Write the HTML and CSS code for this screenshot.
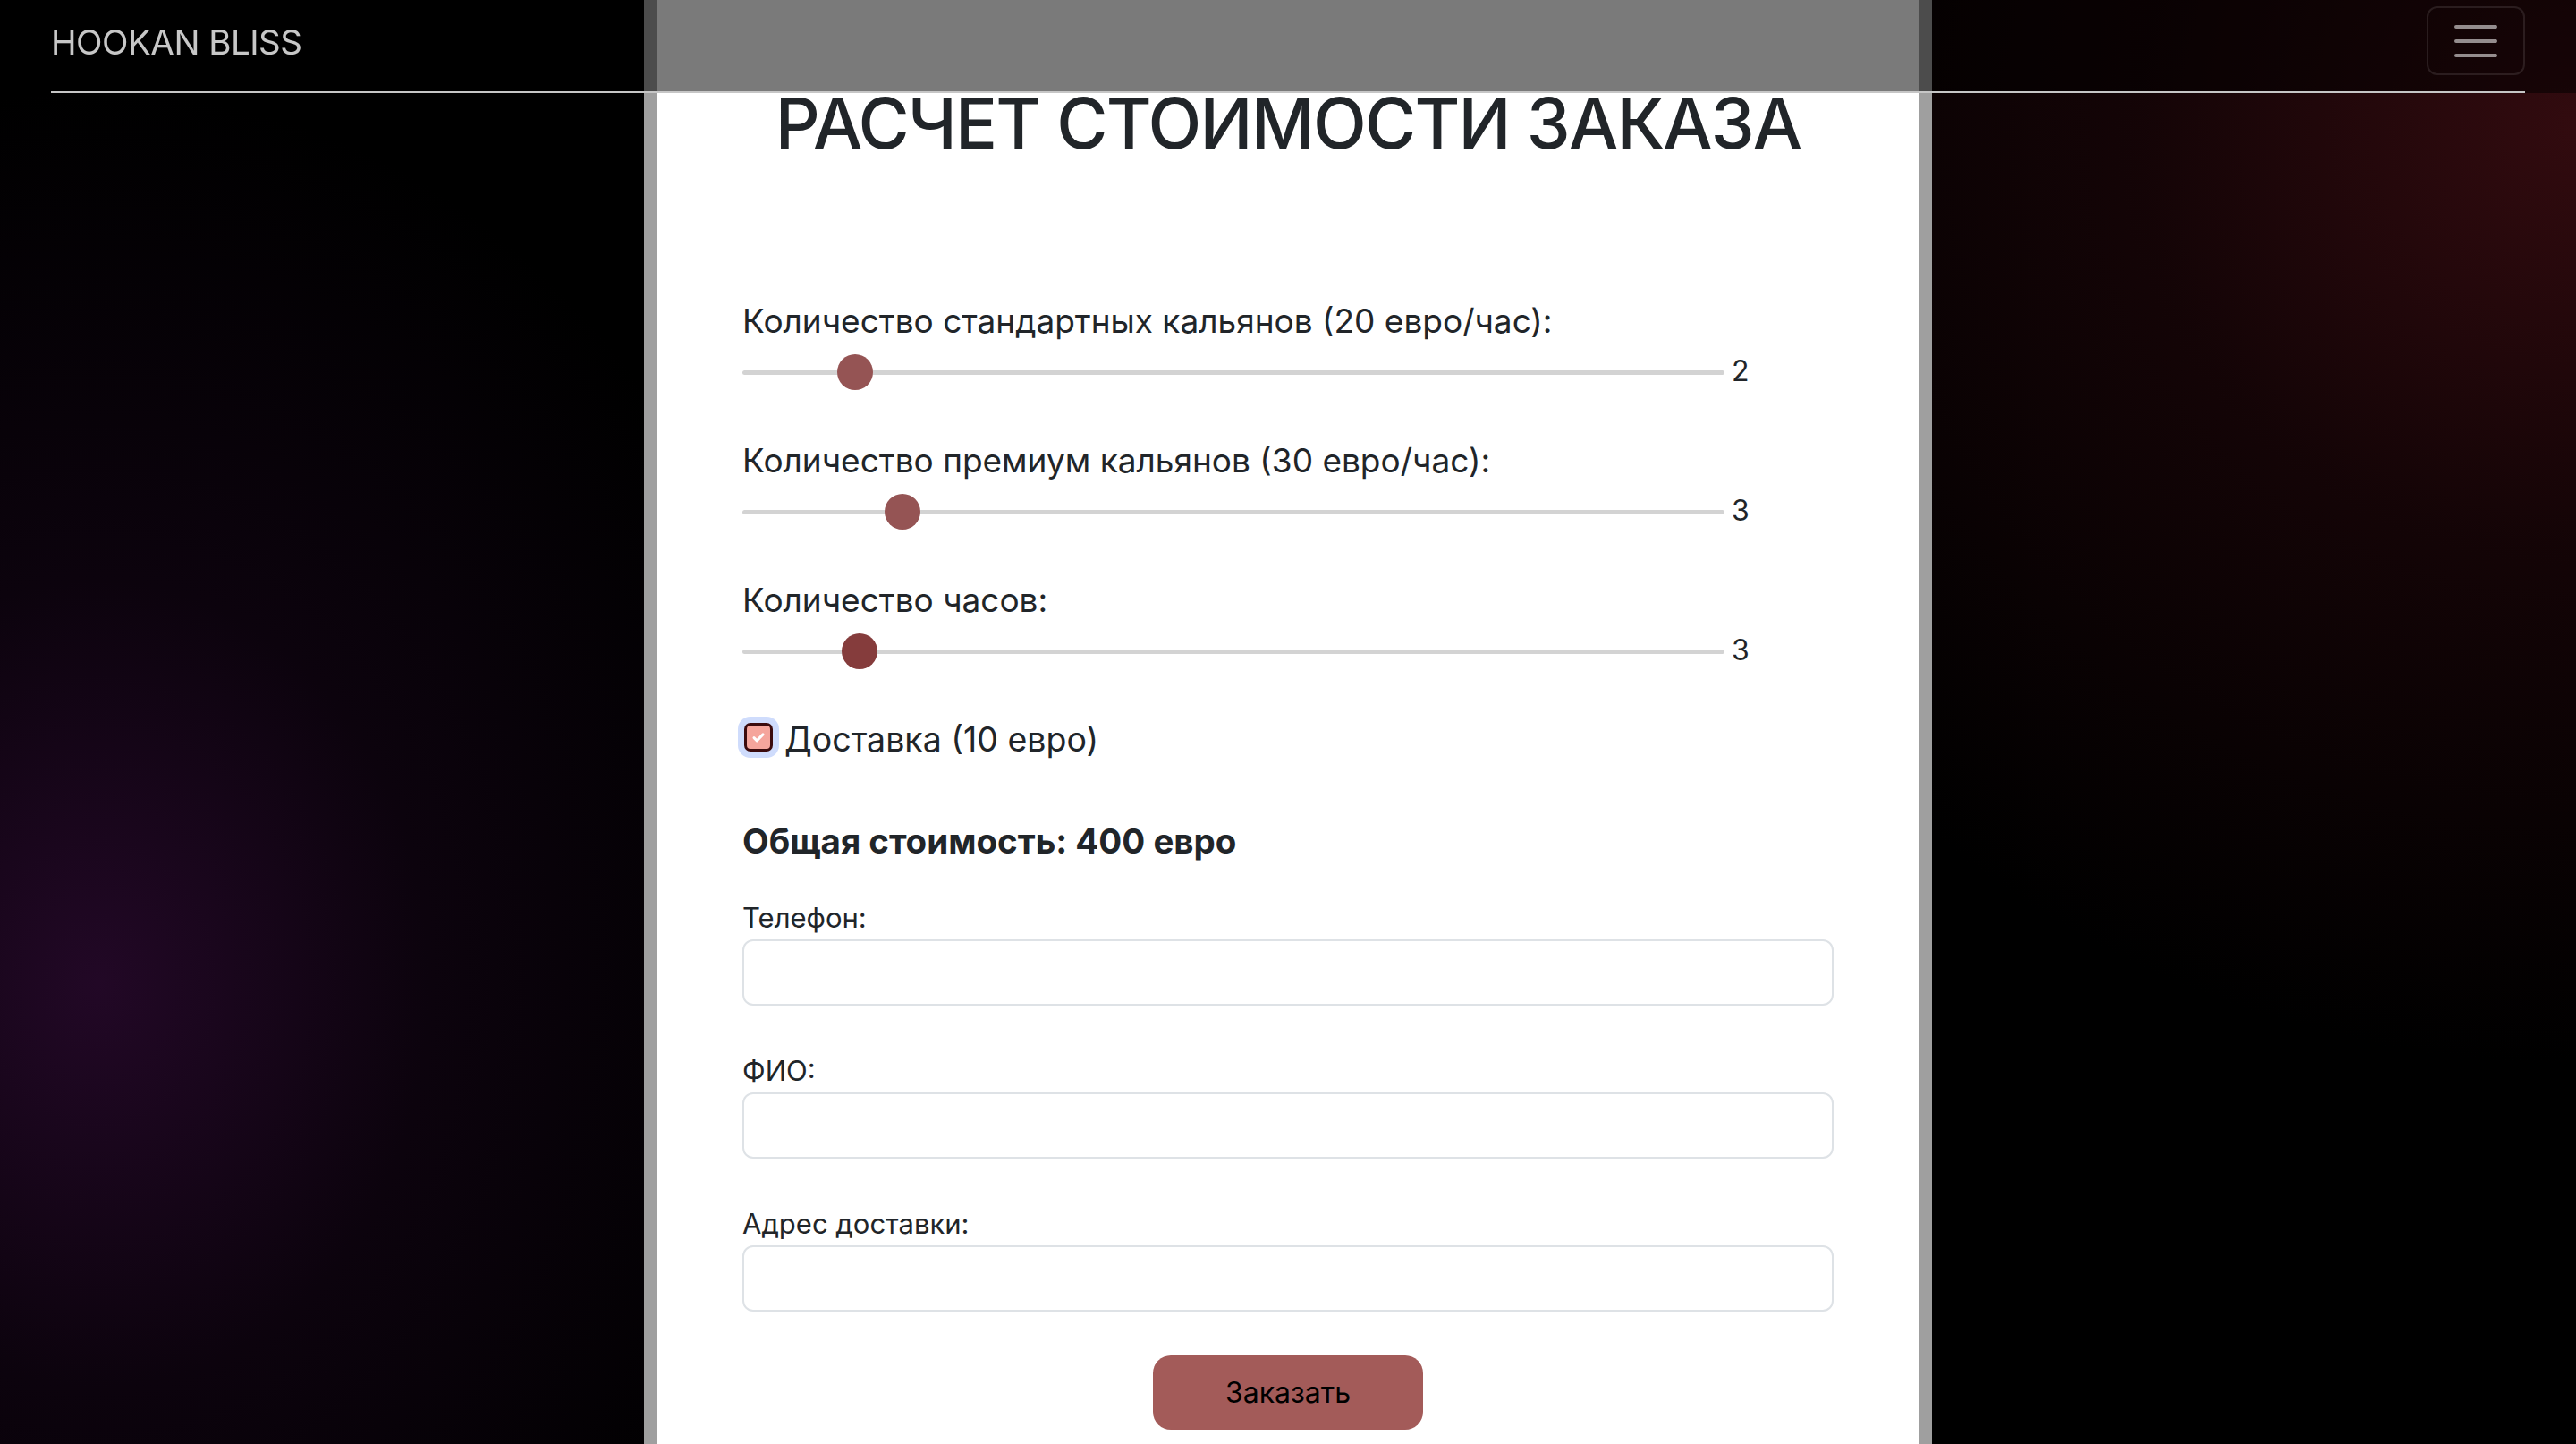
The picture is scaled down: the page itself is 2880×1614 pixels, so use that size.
FILE: index.html
```html
<!DOCTYPE html>
<html lang="ru">
<head>
<meta charset="utf-8">
<title>Hookan Bliss — Расчет стоимости заказа</title>
<link rel="stylesheet" href="styles.css">
</head>
<body>
<header class="navbar">
  <div class="navbar-inner">
    <a class="brand" href="#">HOOKAN BLISS</a>
    <button class="toggler" type="button" aria-label="Меню">
      <svg class="toggler-icon" viewBox="0 0 30 30" width="60" height="60"><path d="M4 7h22M4 15h22M4 23h22" stroke="rgba(255,255,255,0.55)" stroke-width="2" stroke-linecap="round"/></svg>
    </button>
  </div>
</header>

<main class="panel">
  <h1 class="title">РАСЧЕТ СТОИМОСТИ ЗАКАЗА</h1>

  <div class="group">
    <label class="field-label" for="std">Количество стандартных кальянов (20 евро/час):</label>
    <div class="slider-row">
      <input class="range" id="std" type="range" min="0" max="20" value="2">
      <span class="range-value">2</span>
    </div>
  </div>

  <div class="group">
    <label class="field-label" for="prem">Количество премиум кальянов (30 евро/час):</label>
    <div class="slider-row">
      <input class="range" id="prem" type="range" min="0" max="20" value="3">
      <span class="range-value">3</span>
    </div>
  </div>

  <div class="group">
    <label class="field-label" for="hours">Количество часов:</label>
    <div class="slider-row">
      <input class="range range-active" id="hours" type="range" min="1" max="20" value="3">
      <span class="range-value">3</span>
    </div>
  </div>

  <label class="check-row">
    <span class="check-box"><svg viewBox="0 0 16 16" width="20" height="20"><path d="M4 8.5l2.6 2.6L12 5.5" fill="none" stroke="#fff" stroke-width="2.4" stroke-linecap="round" stroke-linejoin="round"/></svg></span>
    <span class="check-label">Доставка (10 евро)</span>
  </label>

  <h4 class="total">Общая стоимость: 400 евро</h4>

  <div class="form-field">
    <label class="small-label" for="phone">Телефон:</label>
    <input class="form-control" id="phone" type="text">
  </div>
  <div class="form-field">
    <label class="small-label" for="fio">ФИО:</label>
    <input class="form-control" id="fio" type="text">
  </div>
  <div class="form-field">
    <label class="small-label" for="addr">Адрес доставки:</label>
    <input class="form-control" id="addr" type="text">
  </div>

  <div class="actions">
    <button class="order-btn" type="button">Заказать</button>
  </div>
</main>
</body>
</html>
```

FILE: styles.css
```css
* { box-sizing: border-box; }

html, body { margin: 0; padding: 0; }

body {
  font-family: "Inter", "Noto Sans", "Liberation Sans", sans-serif;
  color: #212529;
  min-height: 100vh;
  background:
    radial-gradient(ellipse 820px 1000px at 110px 1100px, rgba(34, 8, 38, 1) 0%, rgba(20, 5, 22, 0.6) 45%, rgba(0, 0, 0, 0) 100%),
    radial-gradient(ellipse 1100px 1050px at 2880px 140px, rgba(50, 11, 15, 1) 0%, rgba(28, 6, 9, 0.7) 45%, rgba(0, 0, 0, 0) 100%),
    #000;
  background-attachment: fixed;
}

/* Header */
.navbar {
  position: fixed;
  top: 0;
  left: 0;
  right: 0;
  z-index: 10;
  background: rgba(0, 0, 0, 0.52);
}

.navbar-inner {
  margin: 0 57px;
  padding: 7px 0 18px;
  display: flex;
  align-items: center;
  justify-content: space-between;
  border-bottom: 2px solid #c6c6c6;
}

.brand {
  font-size: 38.5px;
  color: rgba(255, 255, 255, 0.78);
  text-decoration: none;
  letter-spacing: -0.5px;
  position: relative;
  top: 1px;
}

.toggler {
  width: 110px;
  height: 77px;
  padding: 0;
  background: transparent;
  border: 2px solid rgba(255, 255, 255, 0.1);
  border-radius: 12px;
  display: flex;
  align-items: center;
  justify-content: center;
}

.toggler-icon { display: block; }

/* Panel */
.panel {
  width: 1440px;
  margin: 0 auto;
  min-height: 1700px;
  background: #fff;
  border-left: 14px solid #9f9f9f;
  border-right: 14px solid #9f9f9f;
  padding: 90px 96px 60px;
}

.title {
  margin: 0 0 143px;
  font-size: 78px;
  font-weight: 500;
  line-height: 96px;
  text-align: center;
  color: #212529;
  letter-spacing: -1.8px;
}

.group { margin-bottom: 49px; }

.field-label {
  display: block;
  font-size: 37px;
  line-height: 60px;
  margin-bottom: 7px;
}

.slider-row {
  display: flex;
  align-items: center;
  height: 40px;
}

.range {
  -webkit-appearance: none;
  appearance: none;
  width: 1098px;
  height: 40px;
  margin: 0;
  background: transparent;
}

.range::-webkit-slider-runnable-track {
  height: 5px;
  background: #d3d3d3;
  border-radius: 3px;
}

.range::-webkit-slider-thumb {
  -webkit-appearance: none;
  appearance: none;
  width: 40px;
  height: 40px;
  margin-top: -17.5px;
  border-radius: 50%;
  background: #955454;
  border: none;
}

.range-active::-webkit-slider-thumb { background: #853c3c; }

.range-value {
  margin-left: 8px;
  font-size: 32px;
  line-height: 40px;
  position: relative;
  top: -1px;
}

/* Checkbox */
.check-row {
  display: flex;
  align-items: center;
  height: 60px;
  margin-bottom: 56px;
}

.check-box {
  width: 32px;
  height: 32px;
  margin-left: 2px;
  margin-right: 13px;
  border-radius: 7px;
  background: #f5a59c;
  border: 3px solid #3b0b0d;
  box-shadow: 0 0 0 7px #cfdcfc;
  display: flex;
  align-items: center;
  justify-content: center;
  position: relative;
  top: -3px;
}

.check-box svg { display: block; }

.check-label {
  font-size: 37.5px;
  line-height: 60px;
}

.total {
  margin: 0 0 34px;
  font-size: 38.5px;
  font-weight: 700;
  line-height: 55px;
}

/* Form fields */
.form-field { margin-bottom: 49px; }

.small-label {
  display: block;
  font-size: 31px;
  line-height: 48px;
}

.form-control {
  display: block;
  width: 100%;
  height: 74px;
  border: 2px solid #dee2e6;
  border-radius: 12px;
  background: #fff;
  font-size: 32px;
  padding: 0 24px;
}

.actions {
  display: flex;
  justify-content: center;
  margin-top: 7px;
}

.order-btn {
  width: 302px;
  height: 83px;
  border: none;
  border-radius: 20px;
  background: #a35b59;
  color: #000;
  font-family: "Inter", "Noto Sans", sans-serif;
  font-size: 32px;
}
```
